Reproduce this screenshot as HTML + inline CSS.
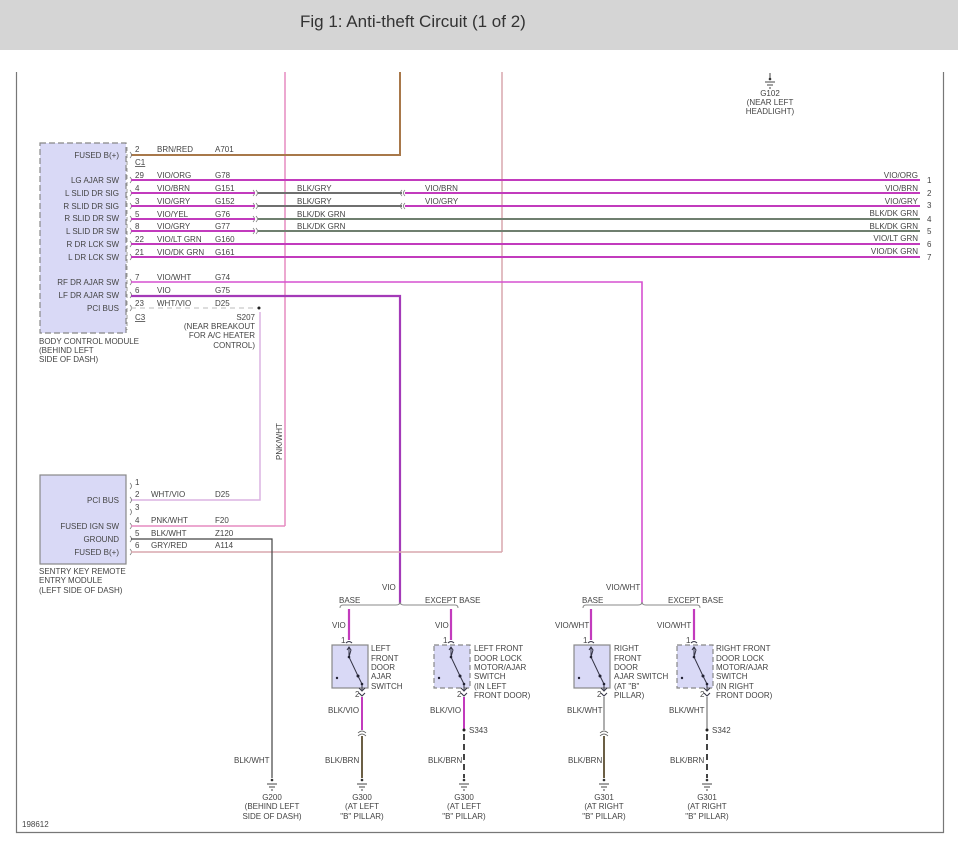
<!DOCTYPE html>
<html><head><meta charset="utf-8"><style>
html,body{margin:0;padding:0;background:#fff;width:958px;height:848px;overflow:hidden}
svg text{font-family:"Liberation Sans",sans-serif;font-size:8px;fill:#444}
</style></head><body>
<svg width="958" height="848" viewBox="0 0 958 848" xmlns="http://www.w3.org/2000/svg">
<rect x="0" y="0" width="958" height="50" fill="#d5d5d5"/>
<text x="300" y="27" style="font-size:17px;fill:#333">Fig 1: Anti-theft Circuit (1 of 2)</text>
<!-- frame -->
<path d="M16.5 72 V832.5 H943.5 V72" fill="none" stroke="#777" stroke-width="1.2"/>

<!-- G102 -->
<g stroke="#444" stroke-width="1"><line x1="770" y1="73" x2="770" y2="80"/><line x1="765" y1="82" x2="775" y2="82"/><line x1="767" y1="85" x2="773" y2="85"/><line x1="769" y1="88" x2="771" y2="88"/></g>
<circle cx="770" cy="79" r="1.3" fill="#333"/>
<text x="770" y="96" text-anchor="middle">G102</text>
<text x="770" y="105" text-anchor="middle">(NEAR LEFT</text>
<text x="770" y="114" text-anchor="middle">HEADLIGHT)</text>

<!-- verticals from top -->
<line x1="285" y1="72" x2="285" y2="526" stroke="#e68cc0" stroke-width="1.5"/>
<line x1="502" y1="72" x2="502" y2="552" stroke="#d9a7ae" stroke-width="1.5"/>
<path d="M131 155 H400 V72" fill="none" stroke="#a8784a" stroke-width="2"/>

<!-- BCM -->
<rect x="40" y="143" width="86" height="190" fill="#d9d9f6" stroke="#888" stroke-width="1.2" stroke-dasharray="6,3"/>
<g style="text-anchor:end">
<text x="119" y="158">FUSED B(+)</text>
<text x="119" y="183">LG AJAR SW</text>
<text x="119" y="196">L SLID DR SIG</text>
<text x="119" y="209">R SLID DR SIG</text>
<text x="119" y="221">R SLID DR SW</text>
<text x="119" y="234">L SLID DR SW</text>
<text x="119" y="247">R DR LCK SW</text>
<text x="119" y="260">L DR LCK SW</text>
<text x="119" y="285">RF DR AJAR SW</text>
<text x="119" y="298">LF DR AJAR SW</text>
<text x="119" y="311">PCI BUS</text>
</g>
<line x1="127" y1="147" x2="127" y2="330" stroke="#999" stroke-width="1" stroke-dasharray="4,3"/>
<text x="39" y="344">BODY CONTROL MODULE</text>
<text x="39" y="353">(BEHIND LEFT</text>
<text x="39" y="362">SIDE OF DASH)</text>
<!-- pin numbers -->
<g>
<text x="135" y="152">2</text><text x="135" y="165" style="text-decoration:underline">C1</text>
<text x="135" y="178">29</text><text x="135" y="191">4</text><text x="135" y="204">3</text>
<text x="135" y="217">5</text><text x="135" y="229">8</text><text x="135" y="242">22</text>
<text x="135" y="255">21</text><text x="135" y="280">7</text><text x="135" y="293">6</text>
<text x="135" y="306">23</text><text x="135" y="320" style="text-decoration:underline">C3</text>
</g>
<g>
<text x="157" y="152">BRN/RED</text><text x="215" y="152">A701</text>
<text x="157" y="178">VIO/ORG</text><text x="215" y="178">G78</text>
<text x="157" y="191">VIO/BRN</text><text x="215" y="191">G151</text>
<text x="157" y="204">VIO/GRY</text><text x="215" y="204">G152</text>
<text x="157" y="217">VIO/YEL</text><text x="215" y="217">G76</text>
<text x="157" y="229">VIO/GRY</text><text x="215" y="229">G77</text>
<text x="157" y="242">VIO/LT GRN</text><text x="215" y="242">G160</text>
<text x="157" y="255">VIO/DK GRN</text><text x="215" y="255">G161</text>
<text x="157" y="280">VIO/WHT</text><text x="215" y="280">G74</text>
<text x="157" y="293">VIO</text><text x="215" y="293">G75</text>
<text x="157" y="306">WHT/VIO</text><text x="215" y="306">D25</text>
<text x="297" y="191">BLK/GRY</text><text x="297" y="204">BLK/GRY</text>
<text x="297" y="217">BLK/DK GRN</text><text x="297" y="229">BLK/DK GRN</text>
<text x="425" y="191">VIO/BRN</text><text x="425" y="204">VIO/GRY</text>
</g>
<!-- connector marks -->
<g fill="none" stroke="#777" stroke-width="0.8">
<path d="M130 152 q3 3 0 6"/><path d="M130 177 q3 3 0 6"/><path d="M130 190 q3 3 0 6"/><path d="M130 203 q3 3 0 6"/><path d="M130 216 q3 3 0 6"/><path d="M130 228 q3 3 0 6"/><path d="M130 241 q3 3 0 6"/><path d="M130 254 q3 3 0 6"/><path d="M130 279 q3 3 0 6"/><path d="M130 292 q3 3 0 6"/><path d="M130 305 q3 3 0 6"/>
<path d="M253 190 q3 3 0 6 M256 190 q3 3 0 6"/><path d="M253 203 q3 3 0 6 M256 203 q3 3 0 6"/><path d="M253 216 q3 3 0 6 M256 216 q3 3 0 6"/><path d="M253 228 q3 3 0 6 M256 228 q3 3 0 6"/>
<path d="M402 190 q-3 3 0 6 M405 190 q-3 3 0 6"/><path d="M402 203 q-3 3 0 6 M405 203 q-3 3 0 6"/>
</g>
<!-- horizontal wires -->
<g stroke-width="2" fill="none">
<line x1="131" y1="180" x2="920" y2="180" stroke="#c23bbd"/>
<line x1="131" y1="193" x2="255" y2="193" stroke="#c23bbd"/>
<line x1="258" y1="193" x2="402" y2="193" stroke="#6f6f6f"/>
<line x1="405" y1="193" x2="920" y2="193" stroke="#c23bbd"/>
<line x1="131" y1="206" x2="255" y2="206" stroke="#c23bbd"/>
<line x1="258" y1="206" x2="402" y2="206" stroke="#6f6f6f"/>
<line x1="405" y1="206" x2="920" y2="206" stroke="#c23bbd"/>
<line x1="131" y1="219" x2="255" y2="219" stroke="#c23bbd"/>
<line x1="258" y1="219" x2="920" y2="219" stroke="#6f7f6f"/>
<line x1="131" y1="231" x2="255" y2="231" stroke="#c23bbd"/>
<line x1="258" y1="231" x2="920" y2="231" stroke="#6f7f6f"/>
<line x1="131" y1="244" x2="920" y2="244" stroke="#c23bbd"/>
<line x1="131" y1="257" x2="920" y2="257" stroke="#c23bbd"/>
<path d="M131 282 H642 V604" stroke="#d550d0" stroke-width="1.6"/>
<path d="M131 296 H400 V604" stroke="#a43ab8" stroke-width="2.2"/>
</g>
<line x1="131" y1="308" x2="258" y2="308" stroke="#bbb" stroke-width="1" stroke-dasharray="5,4"/>
<circle cx="259" cy="308" r="1.5" fill="#222"/>
<path d="M260 312 V500 H131" fill="none" stroke="#dcb4e2" stroke-width="1.5"/>
<text x="255" y="320" text-anchor="end">S207</text>
<text x="255" y="329" text-anchor="end">(NEAR BREAKOUT</text>
<text x="255" y="338" text-anchor="end">FOR A/C HEATER</text>
<text x="255" y="348" text-anchor="end">CONTROL)</text>
<text transform="translate(282,460) rotate(-90)">PNK/WHT</text>
<!-- right end numbers -->
<g style="text-anchor:end">
<text x="918" y="178">VIO/ORG</text><text x="918" y="191">VIO/BRN</text><text x="918" y="204">VIO/GRY</text>
<text x="918" y="216">BLK/DK GRN</text><text x="918" y="229">BLK/DK GRN</text><text x="918" y="241">VIO/LT GRN</text><text x="918" y="254">VIO/DK GRN</text>
</g>
<g><text x="927" y="183">1</text><text x="927" y="196">2</text><text x="927" y="208">3</text><text x="927" y="222">4</text><text x="927" y="234">5</text><text x="927" y="247">6</text><text x="927" y="260">7</text></g>

<!-- SKREEM -->
<rect x="40" y="475" width="86" height="89" fill="#d9d9f6" stroke="#888" stroke-width="1.2"/>
<g style="text-anchor:end">
<text x="119" y="503">PCI BUS</text><text x="119" y="529">FUSED IGN SW</text><text x="119" y="542">GROUND</text><text x="119" y="555">FUSED B(+)</text>
</g>
<text x="39" y="574">SENTRY KEY REMOTE</text>
<text x="39" y="583">ENTRY MODULE</text>
<text x="39" y="593">(LEFT SIDE OF DASH)</text>
<g><text x="135" y="485">1</text><text x="135" y="497">2</text><text x="135" y="510">3</text><text x="135" y="523">4</text><text x="135" y="536">5</text><text x="135" y="548">6</text>
<text x="151" y="497">WHT/VIO</text><text x="215" y="497">D25</text>
<text x="151" y="523">PNK/WHT</text><text x="215" y="523">F20</text>
<text x="151" y="536">BLK/WHT</text><text x="215" y="536">Z120</text>
<text x="151" y="548">GRY/RED</text><text x="215" y="548">A114</text></g>
<g fill="none" stroke="#777" stroke-width="0.8">
<path d="M130 483 q3 3 0 6"/><path d="M130 497 q3 3 0 6"/><path d="M130 509 q3 3 0 6"/><path d="M130 523 q3 3 0 6"/><path d="M130 536 q3 3 0 6"/><path d="M130 549 q3 3 0 6"/>
</g>
<line x1="131" y1="526" x2="285" y2="526" stroke="#e68cc0" stroke-width="1.5"/>
<line x1="131" y1="552" x2="502" y2="552" stroke="#d9a7ae" stroke-width="1.5"/>
<path d="M131 539 H272 V778" fill="none" stroke="#444" stroke-width="1.2"/>
<text x="234" y="763">BLK/WHT</text>
<!-- G200 -->
<g stroke="#444" stroke-width="1"><line x1="267" y1="784" x2="277" y2="784"/><line x1="269" y1="787" x2="275" y2="787"/><line x1="271" y1="790" x2="273" y2="790"/></g>
<circle cx="272" cy="780" r="1.3" fill="#333"/>
<text x="272" y="800" text-anchor="middle">G200</text><text x="272" y="809" text-anchor="middle">(BEHIND LEFT</text><text x="272" y="819" text-anchor="middle">SIDE OF DASH)</text>
<text x="22" y="827">198612</text>

<!-- branch brackets -->
<g fill="none" stroke="#888" stroke-width="1">
<path d="M340 608 q0 -3 3 -3 H396 q4 0 4 -3 q0 3 4 3 H455 q3 0 3 3"/>
<path d="M583 608 q0 -3 3 -3 H638 q4 0 4 -3 q0 3 4 3 H697 q3 0 3 3"/>
</g>
<text x="382" y="590">VIO</text>
<text x="606" y="590">VIO/WHT</text>
<text x="339" y="603">BASE</text><text x="425" y="603">EXCEPT BASE</text>
<text x="582" y="603">BASE</text><text x="668" y="603">EXCEPT BASE</text>
<text x="332" y="628">VIO</text><text x="435" y="628">VIO</text>
<text x="555" y="628">VIO/WHT</text><text x="657" y="628">VIO/WHT</text>
<g stroke-width="2.2" stroke="#c23bbd">
<line x1="349" y1="609" x2="349" y2="640"/><line x1="451" y1="609" x2="451" y2="640"/>
<line x1="591" y1="609" x2="591" y2="640"/><line x1="694" y1="609" x2="694" y2="640"/>
</g>

<!-- switches -->
<g fill="#d9d9f6" stroke="#888" stroke-width="1.2">
<rect x="332" y="645" width="36" height="43"/>
<rect x="434" y="645" width="36" height="43" stroke-dasharray="5,3"/>
<rect x="574" y="645" width="36" height="43"/>
<rect x="677" y="645" width="36" height="43" stroke-dasharray="5,3"/>
</g>
<g fill="none" stroke="#334" stroke-width="1">
<path d="M346 643 q3 -3 6 0 M349 648 V657 M347 650 L349 647 L351 650 L349 657 L358 676 L362 684 V690 M359 688 L362 691 L365 688 M359 693 L362 696 L365 693"/>
<path d="M448 643 q3 -3 6 0 M451 648 V657 M449 650 L451 647 L453 650 L451 657 L460 676 L464 684 V690 M461 688 L464 691 L467 688 M461 693 L464 696 L467 693"/>
<path d="M588 643 q3 -3 6 0 M591 648 V657 M589 650 L591 647 L593 650 L591 657 L600 676 L604 684 V690 M601 688 L604 691 L607 688 M601 693 L604 696 L607 693"/>
<path d="M691 643 q3 -3 6 0 M694 648 V657 M692 650 L694 647 L696 650 L694 657 L703 676 L707 684 V690 M704 688 L707 691 L710 688 M704 693 L707 696 L710 693"/>
</g>
<g fill="#223">
<circle cx="349" cy="657" r="1.3"/><circle cx="358" cy="676" r="1.5"/><circle cx="362" cy="684" r="1.3"/><circle cx="337" cy="678" r="1.2"/>
<circle cx="451" cy="657" r="1.3"/><circle cx="460" cy="676" r="1.5"/><circle cx="464" cy="684" r="1.3"/><circle cx="439" cy="678" r="1.2"/>
<circle cx="591" cy="657" r="1.3"/><circle cx="600" cy="676" r="1.5"/><circle cx="604" cy="684" r="1.3"/><circle cx="579" cy="678" r="1.2"/>
<circle cx="694" cy="657" r="1.3"/><circle cx="703" cy="676" r="1.5"/><circle cx="707" cy="684" r="1.3"/><circle cx="682" cy="678" r="1.2"/>
</g>
<g>
<text x="341" y="643">1</text><text x="355" y="697">2</text>
<text x="443" y="643">1</text><text x="457" y="697">2</text>
<text x="583" y="643">1</text><text x="597" y="697">2</text>
<text x="686" y="643">1</text><text x="700" y="697">2</text>
<text x="371" y="651">LEFT</text><text x="371" y="661">FRONT</text><text x="371" y="670">DOOR</text><text x="371" y="679">AJAR</text><text x="371" y="689">SWITCH</text>
<text x="474" y="651">LEFT FRONT</text><text x="474" y="661">DOOR LOCK</text><text x="474" y="670">MOTOR/AJAR</text><text x="474" y="679">SWITCH</text><text x="474" y="689">(IN LEFT</text><text x="474" y="698">FRONT DOOR)</text>
<text x="614" y="651">RIGHT</text><text x="614" y="661">FRONT</text><text x="614" y="670">DOOR</text><text x="614" y="679">AJAR SWITCH</text><text x="614" y="689">(AT "B"</text><text x="614" y="698">PILLAR)</text>
<text x="716" y="651">RIGHT FRONT</text><text x="716" y="661">DOOR LOCK</text><text x="716" y="670">MOTOR/AJAR</text><text x="716" y="679">SWITCH</text><text x="716" y="689">(IN RIGHT</text><text x="716" y="698">FRONT DOOR)</text>
</g>
<!-- lower wires -->
<g stroke-width="2" fill="none">
<line x1="362" y1="697" x2="362" y2="730" stroke="#c23bbd"/>
<line x1="362" y1="736" x2="362" y2="778" stroke="#6b5f45"/>
<line x1="464" y1="697" x2="464" y2="730" stroke="#c23bbd"/>
<line x1="464" y1="734" x2="464" y2="778" stroke="#444" stroke-dasharray="6,4"/>
<line x1="604" y1="697" x2="604" y2="730" stroke="#777" stroke-width="1.2"/>
<line x1="604" y1="736" x2="604" y2="778" stroke="#6b5f45"/>
<line x1="707" y1="697" x2="707" y2="730" stroke="#777" stroke-width="1.2"/>
<line x1="707" y1="734" x2="707" y2="778" stroke="#444" stroke-dasharray="6,4"/>
</g>
<g fill="none" stroke="#555" stroke-width="0.8">
<path d="M358 733 q4 -4 8 0 M358 736 q4 -4 8 0"/><path d="M600 733 q4 -4 8 0 M600 736 q4 -4 8 0"/>
</g>
<circle cx="464" cy="730" r="1.5" fill="#222"/><circle cx="707" cy="730" r="1.5" fill="#222"/>
<text x="469" y="733">S343</text><text x="712" y="733">S342</text>
<g>
<text x="328" y="713">BLK/VIO</text><text x="430" y="713">BLK/VIO</text><text x="567" y="713">BLK/WHT</text><text x="669" y="713">BLK/WHT</text>
<text x="325" y="763">BLK/BRN</text><text x="428" y="763">BLK/BRN</text><text x="568" y="763">BLK/BRN</text><text x="670" y="763">BLK/BRN</text>
</g>
<!-- grounds -->
<g stroke="#444" stroke-width="1">
<path d="M357 784 h10 M359 787 h6 M361 790 h2"/>
<path d="M459 784 h10 M461 787 h6 M463 790 h2"/>
<path d="M599 784 h10 M601 787 h6 M603 790 h2"/>
<path d="M702 784 h10 M704 787 h6 M706 790 h2"/>
</g>
<g fill="#333"><circle cx="362" cy="780" r="1.3"/><circle cx="464" cy="780" r="1.3"/><circle cx="604" cy="780" r="1.3"/><circle cx="707" cy="780" r="1.3"/></g>
<g text-anchor="middle">
<text x="362" y="800">G300</text><text x="362" y="809">(AT LEFT</text><text x="362" y="819">"B" PILLAR)</text>
<text x="464" y="800">G300</text><text x="464" y="809">(AT LEFT</text><text x="464" y="819">"B" PILLAR)</text>
<text x="604" y="800">G301</text><text x="604" y="809">(AT RIGHT</text><text x="604" y="819">"B" PILLAR)</text>
<text x="707" y="800">G301</text><text x="707" y="809">(AT RIGHT</text><text x="707" y="819">"B" PILLAR)</text>
</g>
</svg>
</body></html>
